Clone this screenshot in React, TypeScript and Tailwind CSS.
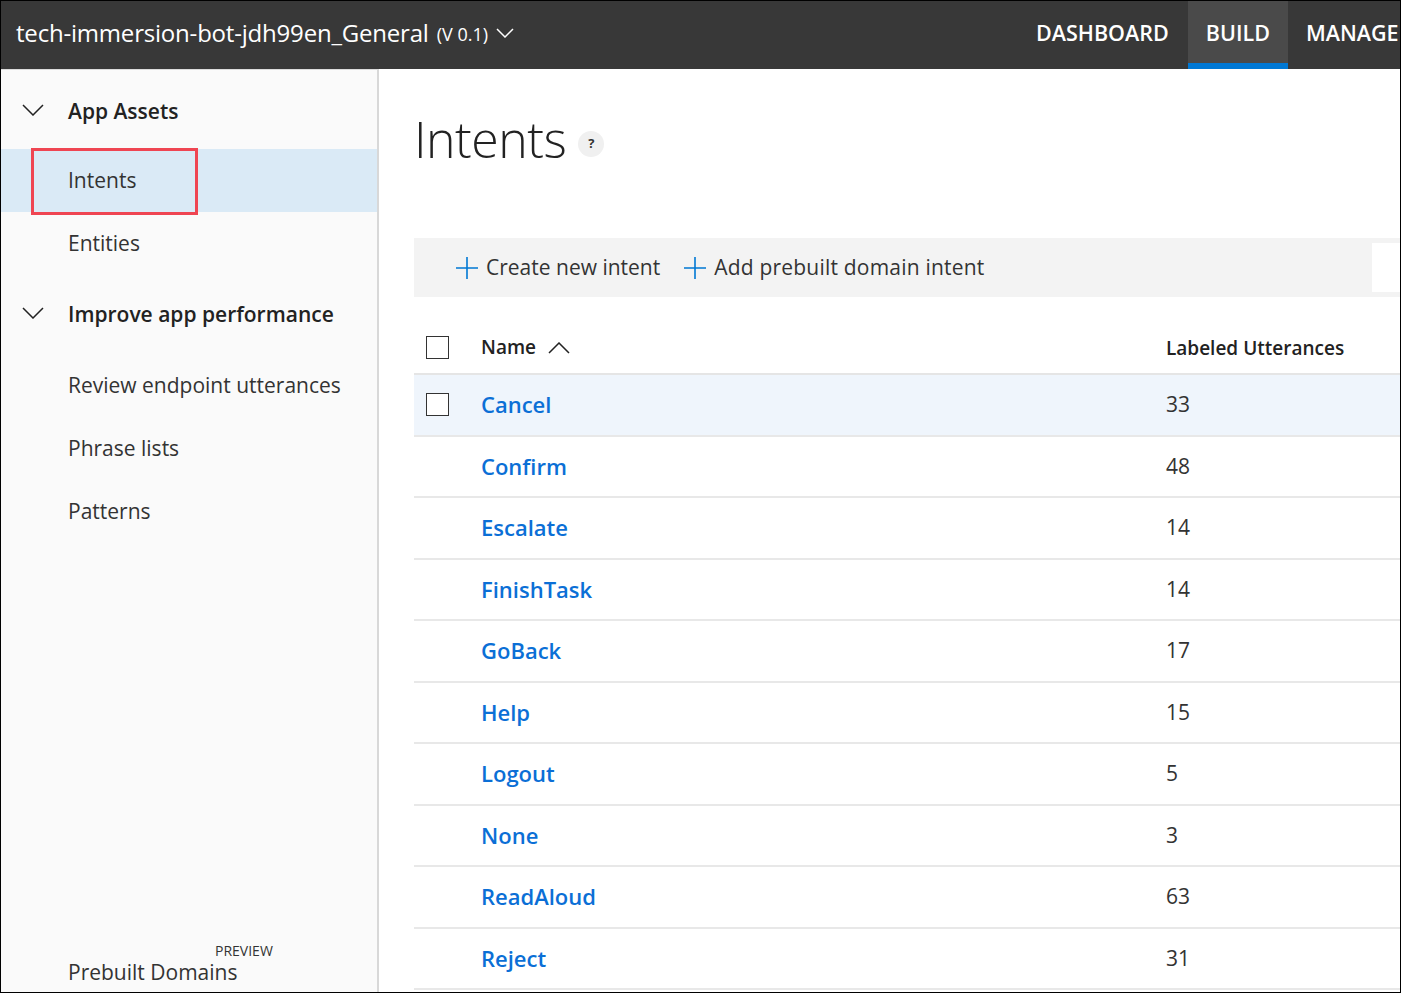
interface IIntent {
  name: string;
  count: number;
}

const INTENTS: IIntent[] = [
  { name: "Cancel", count: 33 },
  { name: "Confirm", count: 48 },
  { name: "Escalate", count: 14 },
  { name: "FinishTask", count: 14 },
  { name: "GoBack", count: 17 },
  { name: "Help", count: 15 },
  { name: "Logout", count: 5 },
  { name: "None", count: 3 },
  { name: "ReadAloud", count: 63 },
  { name: "Reject", count: 31 },
];

const font = { fontFamily: "'Open Sans', 'Noto Sans', sans-serif" };

function Plus() {
  return (
    <svg width="22" height="22" viewBox="0 0 22 22" className="shrink-0">
      <path d="M11 0v22M0 11h22" stroke="#0078d4" strokeWidth="1.6" fill="none" />
    </svg>
  );
}

// thin wide chevron, pointing down or up
function Chevron({ up = false, w = 20, color = "#222" }: { up?: boolean; w?: number; color?: string }) {
  const h = w / 2 + 2;
  return (
    <svg width={w + 2} height={h} viewBox={`0 0 ${w + 2} ${h}`} className="shrink-0">
      <polyline
        points={up ? `1,${h - 1} ${w / 2 + 1},1 ${w + 1},${h - 1}` : `1,1 ${w / 2 + 1},${h - 1} ${w + 1},1`}
        fill="none"
        stroke={color}
        strokeWidth="1.5"
      />
    </svg>
  );
}

function Checkbox() {
  return <div className="w-[23px] h-[23px] border-[1.5px] border-[#333] bg-white" />;
}

export default function App() {
  return (
    <div
      className="w-[1401px] h-[993px] border border-black overflow-hidden flex flex-col bg-white text-[#333]"
      style={font}
    >
      {/* top bar */}
      <header className="h-[68px] shrink-0 bg-[#383838] flex items-stretch text-white overflow-hidden">
        <div className="w-[1017px] shrink-0 flex items-center pl-[15px] gap-[8px] pb-[4px]">
          <span className="text-[24px] tracking-[-0.2px]">tech-immersion-bot-jdh99en_General</span>
          <span className="text-[18px] mt-[2px]">(V 0.1)</span>
          <Chevron w={16} color="#fff" />
        </div>
        <nav className="flex shrink-0 h-full text-[21.5px] font-semibold">
          <div className="pl-[18px] pr-[19px] flex items-center pb-[4px]">DASHBOARD</div>
          <div className="px-[18px] flex items-center bg-[#4a4a4a] border-b-[6px] border-[#0078d4] pt-[2px]">BUILD</div>
          <div className="pl-[18px] flex items-center pb-[4px]">MANAGE</div>
        </nav>
      </header>

      <div className="flex flex-1 min-h-0">
        {/* sidebar */}
        <aside className="w-[378px] shrink-0 bg-[#fafafa] border-t border-[#dcdcdc] border-r-2 border-r-[#d8d8d8] flex flex-col text-[21px] pt-[10px]">
          <div className="h-[63px] flex items-center pl-[21px] font-semibold text-[#222]">
            <span className="mr-[24px] mb-[4px]"><Chevron w={20} /></span>
            App Assets
          </div>
          <div className="mt-[6px] h-[63px] flex items-center bg-[#daeaf6] relative pl-[67px]">
            Intents
            <div className="absolute left-[30px] top-[-1px] w-[167px] h-[67px] border-[3px] border-[#ef4552]" />
          </div>
          <div className="h-[63px] flex items-center pl-[67px]">Entities</div>
          <div className="mt-[8px] h-[63px] flex items-center pl-[21px] font-semibold text-[#222]">
            <span className="mr-[24px] mb-[4px]"><Chevron w={20} /></span>
            Improve app performance
          </div>
          <div className="mt-[8px] h-[63px] flex items-center pl-[67px]">Review endpoint utterances</div>
          <div className="h-[63px] flex items-center pl-[67px]">Phrase lists</div>
          <div className="h-[63px] flex items-center pl-[67px]">Patterns</div>
          <div className="mt-auto pl-[67px] pb-[7px] flex flex-col">
            <span className="text-[14px] leading-[16px] ml-[147px]">PREVIEW</span>
            <span className="leading-[26px]">Prebuilt Domains</span>
          </div>
        </aside>

        {/* main */}
        <main className="flex-1 min-w-0 pl-[35px] pt-[38px]">
          <div className="flex items-center gap-[12px] h-[64px]">
            <h1 className="text-[50px] font-light text-[#222] tracking-[-0.5px]">Intents</h1>
            <div className="w-[26px] h-[26px] rounded-full bg-[#f0f0f0] flex items-center justify-center text-[13px] font-bold mt-[10px]">?</div>
          </div>

          <div className="mt-[67px] h-[59px] bg-[#f3f3f3] flex items-center pl-[42px] text-[21px] text-[#333]">
            <div className="flex items-center gap-[8px]">
              <Plus />
              <span>Create new intent</span>
            </div>
            <div className="flex items-center gap-[8px] ml-[24px]">
              <Plus />
              <span className="tracking-[0.2px]">Add prebuilt domain intent</span>
            </div>
            <div className="ml-auto w-[28px] h-[49px] bg-white" />
          </div>

          <div className="h-[78px] flex items-center border-b-2 border-[#e5e5e5] text-[19px] font-semibold text-[#222]">
            <div className="w-[67px] pl-[12px] flex items-center pt-[25px]">
              <Checkbox />
            </div>
            <div className="flex-1 flex items-center gap-[12px] pt-[25px]">
              <span>Name</span>
              <Chevron up w={20} />
            </div>
            <div className="w-[234px] pt-[27px]">Labeled Utterances</div>
          </div>

          {INTENTS.map((intent, i) => (
            <div
              key={intent.name}
              className={`h-[61.5px] flex items-center border-b-2 border-[#e8e8e8] ${i === 0 ? "bg-[#eff5fc]" : ""}`}
            >
              <div className="w-[67px] pl-[12px] flex items-center">{i === 0 && <Checkbox />}</div>
              <div className="flex-1 text-[22px] font-semibold text-[#0b6fd6]">{intent.name}</div>
              <div className="w-[234px] text-[21px] text-[#333]">{intent.count}</div>
            </div>
          ))}
        </main>
      </div>
    </div>
  );
}
